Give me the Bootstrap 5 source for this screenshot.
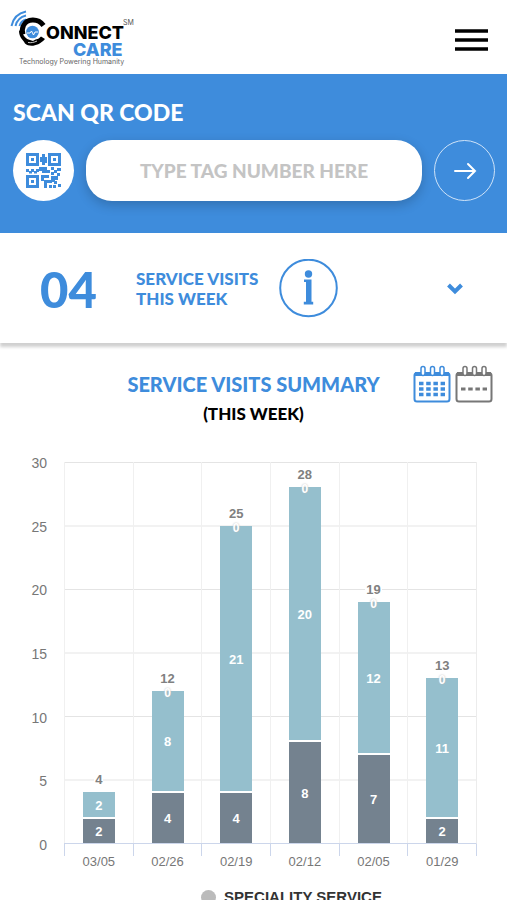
<!DOCTYPE html>
<html lang="en">
<head>
<meta charset="utf-8">
<meta name="viewport" content="width=device-width, initial-scale=1">
<title>Connect Care</title>
<link href="https://cdn.jsdelivr.net/npm/bootstrap@5.3.0/dist/css/bootstrap.min.css" rel="stylesheet">
<style>
:root { --brand: #3e8cdc; --teal: #95bfcd; --slate: #74828f; }
body { font-family: Lato, "Open Sans", sans-serif; background: #fff; color: #000; overflow-x: hidden; }
.topbar { height: 74px; padding: 8px 18px 0 10px; }
.menu-btn { width: 36px; margin-top: 6px; }
.scan { background: var(--brand); padding: 24px 12px 32px 13px; }
.scan-title { font-size: 23px; line-height: 28px; font-weight: 900; margin-bottom: 14px; }
.scan-row { gap: 12px; }
.round-btn { width: 61px; height: 61px; }
.go-btn { border: 1px solid #cfe3f8; }
.tag-input { height: 61px; border-radius: 26px; font-size: 19px; font-weight: 900; box-shadow: 0 4px 12px rgba(0,0,0,.2); }
.tag-input::placeholder { color: #c4c4c4; opacity: 1; }
.visits { height: 110px; padding: 2px 44px 0 40px; box-shadow: 0 4px 3px #d0d0d0; color: var(--brand); }
.visits-count { font-size: 49px; line-height: 56px; font-weight: 900; width: 96px; }
.visits-label { font-size: 17px; line-height: 20px; font-weight: 900; width: 143px; }
.summary { padding: 22px 14px 0; }
.summary-grid { display: grid; grid-template-columns: 80px 1fr 80px; }
.summary-title { font-size: 20px; line-height: 26px; font-weight: 900; color: var(--brand); margin: 6px 0 6px; }
.summary-sub { font-size: 17px; line-height: 22px; font-weight: 900; }
.chart { font-family: "Liberation Sans", Arial, sans-serif; font-size: 13px; line-height: 16px; color: #777; display: grid; grid-template-columns: 47px 1fr; column-gap: 17px; padding-right: 30px; margin-top: 37px; }
.y-axis { margin: -7px 0 -9px; font-size: 14px; }
.plot { height: 382px; border-right: 1px solid #ececec; border-bottom: 1px solid #ccd6eb;
  background: linear-gradient(#e4e4e4, #e4e4e4 1px, transparent 1px) 0 0 / 100% calc(100% / 6); }
.slot { flex: 1 1 0; border-left: 1px solid #f0f0f0; }
.total { font-weight: 700; font-size: 13px; line-height: 16px; margin-bottom: 4px; color: #808080; background: #fff; padding: 0 1px; }
.stack { width: 32px; font-size: 13px; font-weight: 700; color: #fff; }
.seg-a { background: var(--teal); border-bottom: 1px solid #fff; padding-top: 3px; }
.seg-b { background: var(--slate); border-top: 1px solid #fff; padding-top: 2px; }
.zero { top: -5px; left: 0; right: 0; line-height: 14px; font-size: 12px; text-shadow: 0 0 2px #bbb; }
.x-axis { grid-column: 2; }
.tick { flex: 1 1 0; border-left: 1px solid #ccd6eb; height: 12px; padding-top: 10px; }
.tick:last-child { border-right: 1px solid #ccd6eb; }
.legend-row { font: 700 15px/16px "Liberation Sans", Arial, sans-serif; color: #333; margin-top: 33px; gap: 8px; padding-left: 76px; }
.dot { width: 15px; height: 15px; background: #bbb; }
</style>
<script src="https://cdn.jsdelivr.net/npm/bootstrap@5.3.0/dist/js/bootstrap.bundle.min.js"></script>
</head>
<body>
<header class="topbar d-flex justify-content-between align-items-start">
  <a href="#" aria-label="Connect Care home">
    <svg class="d-block" width="126" height="60" viewBox="10 8 126 60">
      <g fill="none" stroke="#3e8cdc" stroke-width="2">
        <path d="M19.500 26Q21 21 26 19.500M15.500 26Q17.500 17.500 26 15.500M11.500 26Q14 14 26 11.500"/>
      </g>
      <path d="M43.500 25.500C38 18 27 18.500 23.500 25.500c-1.500 3-1.500 6-.5 9" fill="none" stroke="#000" stroke-width="5"/>
      <path d="M19 30.500c0 7 4 9 6 13 4 3.500 13 3.500 20-4.500l-4-2.500c-3 3.500-6 2.500-8 4.500l-3-1c-4-1-7-4-8-9z" fill="#000"/>
      <path d="M28 42.500c3 .5 6 0 9-1.500" fill="none" stroke="#fff" stroke-width=".8"/>
      <circle cx="32.500" cy="32" r="6.300" fill="#3e8cdc"/>
      <path d="M27 33h3l1.500-2 2 4 1.500-3h3" fill="none" stroke="#fff"/>
      <g font-family="Inter, sans-serif">
        <text x="46" y="39" font-size="18" font-weight="800" fill="#000">ONNECT</text>
        <text x="73" y="56" font-size="18" font-weight="800" fill="#3e8cdc">CARE</text>
        <text x="123" y="25" font-size="7" fill="#555">SM</text>
      </g>
      <text x="19" y="64" font-family="Inter, sans-serif" font-size="7" fill="#666">Technology Powering Humanity</text>
    </svg>
  </a>
  <button type="button" class="btn p-0 border-0 rounded-0 menu-btn" aria-label="Menu">
    <svg class="d-block" width="36" height="40" viewBox="0 0 36 40"><path d="M2 17h33M2 26h33M2 35h33" stroke="#000" stroke-width="3.600"/></svg>
  </button>
</header>

<main>
  <section class="scan">
    <h1 class="scan-title text-white">SCAN QR CODE</h1>
    <form class="scan-row d-flex align-items-center">
      <button type="button" class="btn btn-light bg-white border-0 rounded-circle p-0 round-btn flex-shrink-0 d-flex align-items-center justify-content-center" aria-label="Scan QR code">
        <svg width="35" height="35" viewBox="0 0 35 35" fill="#3e8cdc">
          <path fill-rule="evenodd" d="M0 0h13v13H0zM3 3v7h7V3zM22 0h13v13H22zM25 3v7h7V3zM0 22h13v13H0zM3 25v7h7v-7z"/>
          <path d="M5 5h3v3H5zM27 5h3v3h-3zM5 27h3v3H5zM16 1h3v3h2v6h-2v2h-3V9h-2V4h2zM0 16h3v3H0zM5 16h3v3H5zM10 16h3v3h-3zM3 18h3v2.500H3zM8 18h3v2.500H8zM13 14h8v3h3v3h-8v-2h-3zM25 14h3v3h-3zM31 15h4v3h-4zM28 17h3v3h-3zM25 19h3v3h-3zM31 20h3v3h-3zM15 22h8v3h-5v3h-3zM25 23h7v4h-3v2h-4zM18 27h8v3h-5v5h-3zM23 32h3v3h-3zM28 28h3v3h-3zM27 32h3v3h-3zM32 31h3v3h-3z"/>
        </svg>
      </button>
      <input type="text" class="form-control border-0 text-center tag-input" placeholder="TYPE TAG NUMBER HERE" aria-label="Tag number">
      <button type="submit" class="btn rounded-circle p-0 round-btn go-btn flex-shrink-0 d-flex align-items-center justify-content-center" aria-label="Go">
        <svg width="24" height="20" viewBox="0 0 24 20" fill="none" stroke="#fff" stroke-width="2" stroke-linecap="round"><path d="M2 10h20M15 3l7 7-7 7"/></svg>
      </button>
    </form>
  </section>

  <section class="visits d-flex align-items-center">
    <div class="visits-count">04</div>
    <div class="visits-label">SERVICE VISITS<br>THIS WEEK</div>
    <button type="button" class="btn border-0 p-0" aria-label="Information">
      <svg class="d-block" width="60" height="60" viewBox="0 0 60 60" fill="#3e8cdc"><circle cx="29.500" cy="29" r="28.300" fill="none" stroke="#3e8cdc" stroke-width="2"/><circle cx="29.500" cy="15" r="3.700"/><path d="M25 20.500h7.500v22.200h1.700V45.500H24.800v-2.800h2.200V23H25z"/></svg>
    </button>
    <button type="button" class="btn border-0 p-0 ms-auto" aria-label="Expand">
      <svg class="d-block" width="16" height="12" viewBox="0 0 16 12" fill="none" stroke="#3e8cdc" stroke-width="4"><path d="M1.500 2L8 8.500 14.500 2"/></svg>
    </button>
  </section>

  <section class="summary">
    <div class="summary-grid">
      <span></span>
      <div class="text-center text-nowrap">
        <h2 class="summary-title">SERVICE VISITS SUMMARY</h2>
        <div class="summary-sub">(THIS WEEK)</div>
      </div>
      <div class="d-flex gap-1 justify-content-end align-items-start">
        <button type="button" class="btn border-0 p-0" aria-label="Week view">
          <svg class="d-block" width="38" height="38" viewBox="0 0 38 38" fill="none" stroke="#3e8cdc" stroke-width="2"><rect x="1.500" y="8" width="35" height="28.500" rx="2.500"/><path d="M2 9h34" stroke-width="4"/><g fill="#fff" stroke-width="1.500"><rect x="8" y="1.500" width="4" height="9" rx="2"/><rect x="17.500" y="1.500" width="4" height="9" rx="2"/><rect x="27" y="1.500" width="4" height="9" rx="2"/></g><path d="M6 18.500h26M6 24h26M6 29.500h26" stroke-width="3.500" stroke-dasharray="4.500 2.700"/></svg>
        </button>
        <button type="button" class="btn border-0 p-0" aria-label="Month view">
          <svg class="d-block" width="38" height="38" viewBox="0 0 38 38" fill="none" stroke="#777" stroke-width="2"><rect x="1.500" y="8" width="35" height="28.500" rx="2.500"/><path d="M2 9h34" stroke-width="4"/><g fill="#fff" stroke-width="1.500"><rect x="8" y="1.500" width="4" height="9" rx="2"/><rect x="17.500" y="1.500" width="4" height="9" rx="2"/><rect x="27" y="1.500" width="4" height="9" rx="2"/></g><path d="M6 24h26" stroke-width="3" stroke-dasharray="4.500 2.700"/></svg>
        </button>
      </div>
    </div>
  </section>

  <section class="chart" aria-label="Service visits by week">
    <div class="y-axis d-flex flex-column justify-content-between text-end">
      <span>30</span><span>25</span><span>20</span><span>15</span><span>10</span><span>5</span><span>0</span>
    </div>
    <div class="plot d-flex">
      <div class="slot d-flex flex-column align-items-center justify-content-end">
        <div class="total">4</div>
        <div class="stack d-flex flex-column" style="height:13.33%">
          <div class="seg-a d-flex align-items-center justify-content-center" style="height:50%">2</div>
          <div class="seg-b d-flex align-items-center justify-content-center" style="height:50%">2</div>
        </div>
      </div>
      <div class="slot d-flex flex-column align-items-center justify-content-end">
        <div class="total">12</div>
        <div class="stack d-flex flex-column position-relative" style="height:40%">
          <span class="zero position-absolute text-center">0</span>
          <div class="seg-a d-flex align-items-center justify-content-center" style="height:66.67%">8</div>
          <div class="seg-b d-flex align-items-center justify-content-center" style="height:33.33%">4</div>
        </div>
      </div>
      <div class="slot d-flex flex-column align-items-center justify-content-end">
        <div class="total">25</div>
        <div class="stack d-flex flex-column position-relative" style="height:83.33%">
          <span class="zero position-absolute text-center">0</span>
          <div class="seg-a d-flex align-items-center justify-content-center" style="height:84%">21</div>
          <div class="seg-b d-flex align-items-center justify-content-center" style="height:16%">4</div>
        </div>
      </div>
      <div class="slot d-flex flex-column align-items-center justify-content-end">
        <div class="total">28</div>
        <div class="stack d-flex flex-column position-relative" style="height:93.33%">
          <span class="zero position-absolute text-center">0</span>
          <div class="seg-a d-flex align-items-center justify-content-center" style="height:71.43%">20</div>
          <div class="seg-b d-flex align-items-center justify-content-center" style="height:28.57%">8</div>
        </div>
      </div>
      <div class="slot d-flex flex-column align-items-center justify-content-end">
        <div class="total">19</div>
        <div class="stack d-flex flex-column position-relative" style="height:63.33%">
          <span class="zero position-absolute text-center">0</span>
          <div class="seg-a d-flex align-items-center justify-content-center" style="height:63.16%">12</div>
          <div class="seg-b d-flex align-items-center justify-content-center" style="height:36.84%">7</div>
        </div>
      </div>
      <div class="slot d-flex flex-column align-items-center justify-content-end">
        <div class="total">13</div>
        <div class="stack d-flex flex-column position-relative" style="height:43.33%">
          <span class="zero position-absolute text-center">0</span>
          <div class="seg-a d-flex align-items-center justify-content-center" style="height:84.62%">11</div>
          <div class="seg-b d-flex align-items-center justify-content-center" style="height:15.38%">2</div>
        </div>
      </div>
    </div>
    <div class="x-axis d-flex text-center">
      <div class="tick">03/05</div><div class="tick">02/26</div><div class="tick">02/19</div><div class="tick">02/12</div><div class="tick">02/05</div><div class="tick">01/29</div>
    </div>
  </section>
  <div class="legend-row d-flex justify-content-center align-items-center">
    <span class="dot rounded-circle"></span><span>SPECIALITY SERVICE</span>
  </div>
</main>
</body>
</html>
